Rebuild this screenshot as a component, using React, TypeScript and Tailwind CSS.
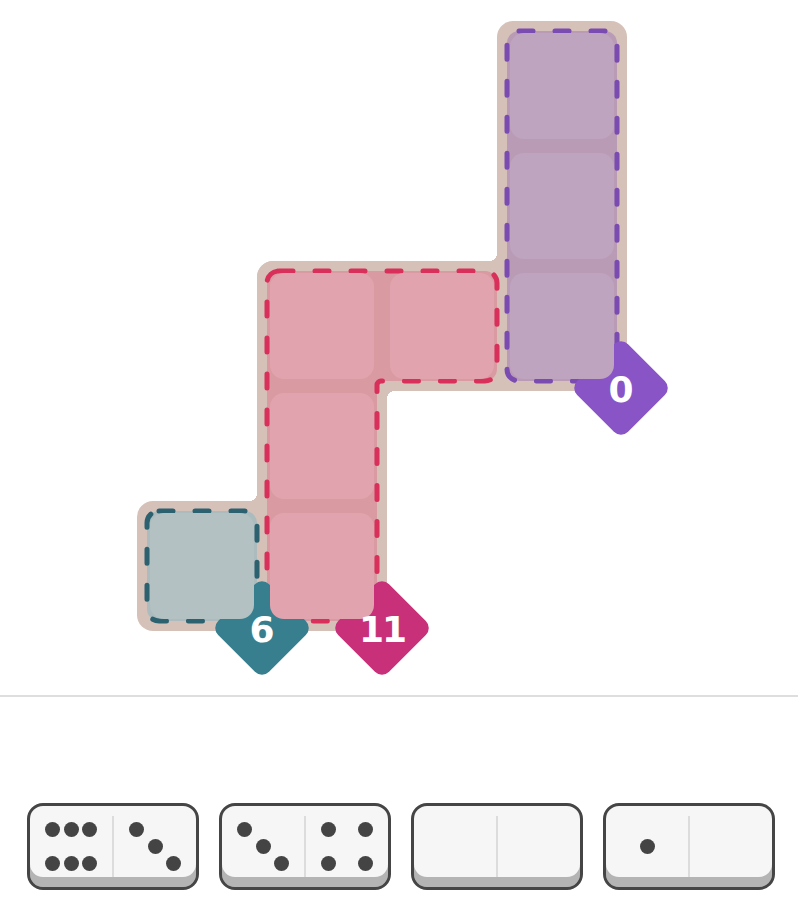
const PIPS: Record<number, [number, number][]> = {
  0: [],
  1: [[1, 1]],
  3: [[0, 0], [1, 1], [2, 2]],
  4: [[0, 0], [2, 0], [0, 2], [2, 2]],
  6: [[0, 0], [1, 0], [2, 0], [0, 2], [1, 2], [2, 2]],
}

const COLS = ['col-start-1', 'col-start-2', 'col-start-3']
const ROWS = ['row-start-1', 'row-start-2', 'row-start-3']

function Half({ value }: { value: number }) {
  return (
    <div className="flex flex-1 items-center justify-center">
      <div className="grid grid-cols-[repeat(3,18.5px)] grid-rows-[repeat(3,17px)] place-items-center">
        {PIPS[value].map(([c, r], i) => (
          <div key={i} className={`${COLS[c]} ${ROWS[r]} h-[15px] w-[15px] rounded-full bg-[#444444]`} />
        ))}
      </div>
    </div>
  )
}

function Domino({ a, b }: { a: number; b: number }) {
  return (
    <div className="flex h-[87px] w-[172px] rounded-[16px] border-[3px] border-[#454545] bg-[#f6f6f6] shadow-[inset_0_-10px_0_#b4b4b4]">
      <Half value={a} />
      <div className="my-[10px] w-[2px] bg-[#dcdcdc]" />
      <Half value={b} />
    </div>
  )
}

const dash = {
  fill: 'none',
  strokeWidth: 5,
  strokeLinecap: 'round' as const,
  strokeLinejoin: 'round' as const,
  strokeDasharray: '14 22',
}

function Board() {
  return (
    <div className="relative grid grid-cols-[repeat(4,110px)] grid-rows-[repeat(5,110px)] gap-[10px] p-[10px]">
      {/* tan base */}
      <div className="col-start-4 row-start-1 row-span-3 -m-[10px] rounded-t-[16px] rounded-br-[16px] bg-[#d6c1b9]" />
      <div className="col-start-2 col-span-3 row-start-3 -m-[10px] rounded-tl-[16px] rounded-br-[16px] bg-[#d6c1b9]" />
      <div className="col-start-2 row-start-3 row-span-3 -m-[10px] rounded-tl-[16px] rounded-br-[16px] bg-[#d6c1b9]" />
      <div className="col-start-1 col-span-2 row-start-5 -m-[10px] rounded-l-[16px] rounded-br-[16px] bg-[#d6c1b9]" />
      <div className="absolute left-[352px] top-[232px] h-[8px] w-[8px] bg-[radial-gradient(circle_at_0_0,transparent_8px,#d6c1b9_8px)]" />
      <div className="absolute left-[250px] top-[370px] h-[8px] w-[8px] bg-[radial-gradient(circle_at_100%_100%,transparent_8px,#d6c1b9_8px)]" />
      <div className="absolute left-[112px] top-[472px] h-[8px] w-[8px] bg-[radial-gradient(circle_at_0_0,transparent_8px,#d6c1b9_8px)]" />

      {/* region fills */}
      <div className="col-start-4 row-start-1 row-span-3 rounded-[12px] bg-[#b99bb6]" />
      <div className="col-start-2 col-span-2 row-start-3 rounded-[12px] rounded-bl-none bg-[#d99aa1]" />
      <div className="col-start-2 row-start-3 row-span-3 rounded-[12px] rounded-tr-none bg-[#d99aa1]" />
      <div className="col-start-1 row-start-5 rounded-[12px] bg-[#acbbbd]" />

      {/* dashed outlines */}
      <svg className="pointer-events-none absolute inset-0 z-[1]" width="490" height="610" viewBox="0 0 490 610">
        <rect x="370" y="10" width="110" height="350" rx="12" stroke="#7a4bb0" {...dash} />
        <path
          d="M142 250 H348 A12 12 0 0 1 360 262 V348 A12 12 0 0 1 348 360 H244 A4 4 0 0 0 240 364 V588 A12 12 0 0 1 228 600 H142 A12 12 0 0 1 130 588 V262 A12 12 0 0 1 142 250 Z"
          stroke="#d8305a"
          {...dash}
        />
        <rect x="10" y="490" width="110" height="110" rx="12" stroke="#2c6170" {...dash} />
      </svg>

      {/* badges */}
      <div className="absolute left-[78px] top-[560px] z-[2] flex h-[94px] w-[94px] items-center justify-center">
        <div className="h-[72px] w-[72px] rotate-45 rounded-[10px] bg-[#377f8f]" />
      </div>
      <div className="absolute left-[198px] top-[560px] z-[2] flex h-[94px] w-[94px] items-center justify-center">
        <div className="h-[72px] w-[72px] rotate-45 rounded-[10px] bg-[#c8307a]" />
      </div>
      <div className="absolute left-[437px] top-[320px] z-[2] flex h-[94px] w-[94px] items-center justify-center">
        <div className="h-[72px] w-[72px] rotate-45 rounded-[10px] bg-[#8954c6]" />
      </div>

      {/* cells */}
      <div className="relative z-[3] col-start-4 row-start-1 mx-[3px] my-[2px] rounded-[14px] bg-[#bfa4bf]" />
      <div className="relative z-[3] col-start-4 row-start-2 mx-[3px] my-[2px] rounded-[14px] bg-[#bfa4bf]" />
      <div className="relative z-[3] col-start-4 row-start-3 mx-[3px] my-[2px] rounded-[14px] bg-[#bfa4bf]" />
      <div className="relative z-[3] col-start-2 row-start-3 mx-[3px] my-[2px] rounded-[14px] bg-[#e1a4ae]" />
      <div className="relative z-[3] col-start-3 row-start-3 mx-[3px] my-[2px] rounded-[14px] bg-[#e1a4ae]" />
      <div className="relative z-[3] col-start-2 row-start-4 mx-[3px] my-[2px] rounded-[14px] bg-[#e1a4ae]" />
      <div className="relative z-[3] col-start-2 row-start-5 mx-[3px] my-[2px] rounded-[14px] bg-[#e1a4ae]" />
      <div className="relative z-[3] col-start-1 row-start-5 mx-[3px] my-[2px] rounded-[14px] bg-[#b3c1c2]" />

      {/* badge labels */}
      <div className="absolute left-[78px] top-[562px] z-[4] flex h-[94px] w-[94px] items-center justify-center font-['DejaVu_Sans',sans-serif] text-[36px] font-bold leading-none text-white">
        6
      </div>
      <div className="absolute left-[198px] top-[562px] z-[4] flex h-[94px] w-[94px] items-center justify-center font-['DejaVu_Sans',sans-serif] text-[36px] font-bold leading-none tracking-[-2px] text-white">
        11
      </div>
      <div className="absolute left-[437px] top-[322px] z-[4] flex h-[94px] w-[94px] items-center justify-center font-['DejaVu_Sans',sans-serif] text-[36px] font-bold leading-none text-white">
        0
      </div>
    </div>
  )
}

export default function App() {
  return (
    <div className="h-[908px] w-[798px] overflow-hidden bg-white">
      <div className="h-[695px] pl-[137px] pt-[21px]">
        <Board />
      </div>
      <div className="h-[2px] bg-[#dedede]" />
      <div className="flex gap-[20px] pl-[27px] pt-[106px]">
        <Domino a={6} b={3} />
        <Domino a={3} b={4} />
        <Domino a={0} b={0} />
        <Domino a={1} b={0} />
      </div>
    </div>
  )
}
